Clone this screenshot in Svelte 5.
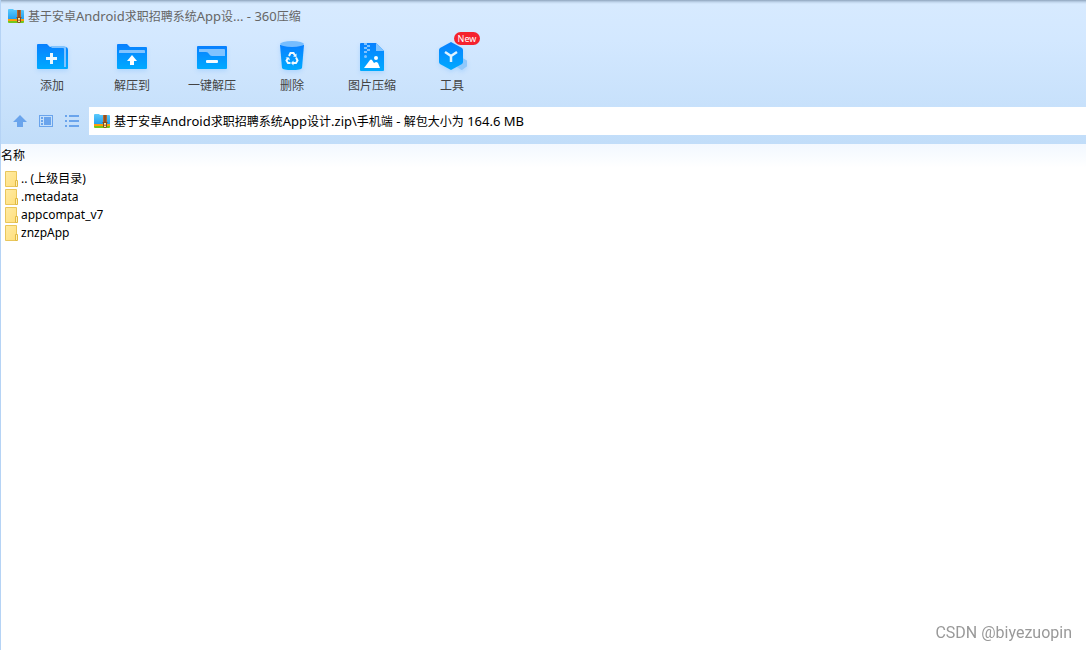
<script lang="ts">
  const archive = '基于安卓Android求职招聘系统App设计.zip';
  const folder = '手机端';
  const size = '164.6 MB';

  const tools = [
    { id: 'add', label: '添加' },
    { id: 'extract', label: '解压到' },
    { id: 'quick', label: '一键解压' },
    { id: 'delete', label: '删除' },
    { id: 'image', label: '图片压缩' },
    { id: 'tools', label: '工具', badge: 'New' },
  ];

  const files = ['.. (上级目录)', '.metadata', 'appcompat_v7', 'znzpApp'];

  const title = archive.slice(0, 21) + '... - 360压缩';
  const path = `${archive}\\${folder} - 解包大小为 ${size}`;

  // latin runs are set one size up from the chinese ones
  function runs(text: string) {
    return text.match(/[\x20-\x7e]+|[^\x20-\x7e]+/g) ?? [];
  }
</script>

{#snippet mixed(text: string)}
  {#each runs(text) as run}<span class:latin={run.charCodeAt(0) < 128}>{run}</span>{/each}
{/snippet}

{#snippet zipIcon()}
  <svg class="zip" width="16" height="14" viewBox="0 0 16 14" aria-hidden="true">
    <path d="M0 1q0-1 1-1h4l1 1h9q1 0 1 1v9H0z" fill="url(#zip-blue)" />
    <path d="M0 10h16v2H0z" fill="#ff9d0a" />
    <path d="M0 12h16v1q0 1-1 1H1q-1 0-1-1z" fill="#72c71c" />
    <path d="M9 1h4v10H9z" fill="#b8682c" />
    <path d="M10.500 1h1v8h-1z" fill="#6b3d20" />
    <path d="M8.500 8h5v1h-5z" fill="#8a4a18" />
    <path d="M9 9h4v4q-2 2-4 0z" fill="#8a4a18" />
    <path d="M10 9h2v4h-2z" fill="#ffe9a0" />
    <path d="M10.500 10.500h1v1.500h-1z" fill="#633918" />
  </svg>
{/snippet}

<svg class="defs" width="0" height="0" aria-hidden="true">
  <defs>
    <linearGradient id="blue" x1="0" y1="0" x2="0" y2="1">
      <stop offset="0" stop-color="#0880ff" />
      <stop offset="1" stop-color="#00aaff" />
    </linearGradient>
    <linearGradient id="zip-blue" x1="0" y1="0" x2="0" y2="1">
      <stop offset="0" stop-color="#5bcafc" />
      <stop offset="1" stop-color="#1d9cef" />
    </linearGradient>
    <linearGradient id="folder" x1="0" y1="0" x2="1" y2="1">
      <stop offset="0" stop-color="#ffeba3" />
      <stop offset="1" stop-color="#ffdf7c" />
    </linearGradient>
  </defs>
</svg>

<div class="window">
  <header class="chrome">
    <div class="titlebar">
      {@render zipIcon()}
      <span class="title">{@render mixed(title)}</span>
    </div>

    <div class="toolbar">
      {#each tools as tool}
        <button class="tool" type="button">
          <span class="tool-icon">
            <svg width="32" height="32" viewBox="0 0 32 32" aria-hidden="true">
              {#if tool.id === 'add'}
                <path d="M1 5q0-1 1-1h9l3 3h15q3 0 3 3v18q0 1-1 1H2q-1 0-1-1z" fill="url(#blue)" />
                <path d="M14 6h14q2 0 2 2v19h-2V9q0-1-1-1H16z" fill="#80c3ff" />
                <path d="M14 13h3v4h4v3h-4v4h-3v-4h-4v-3h4z" fill="#eaf8ff" />
              {:else if tool.id === 'extract'}
                <path d="M1 5q0-1 1-1h9l3 3h16q1 0 1 1v20q0 1-1 1H2q-1 0-1-1z" fill="url(#blue)" />
                <path d="M3 13v-2q0-1 1-1h24q1 0 1 1v2z" fill="#80c3ff" />
                <path d="M16 15l5 6h-3v4h-4v-4h-3z" fill="#fff" />
              {:else if tool.id === 'quick'}
                <rect x="1" y="6" width="30" height="23" rx="1" fill="url(#blue)" />
                <path d="M3 9h25q1 0 1 1v6H16q-2 0-3-2t-3-2H3z" fill="#80c3ff" />
                <rect x="10" y="20" width="12" height="3" rx="1" fill="#f5fbff" />
              {:else if tool.id === 'delete'}
                <path d="M4 5l2 23q1 2 10 2t10-2l2-23z" fill="url(#blue)" />
                <ellipse cx="16" cy="4" rx="12" ry="3" fill="#76bdff" />
                <g fill="none" stroke="#f0faff" stroke-width="2">
                  <path d="M13 16l1.500-3h3l1.500 2.500" />
                  <path d="M20 17.500l1.500 3L20 23h-3" />
                  <path d="M14.500 23H12l-1.500-2.500 1.500-2.500" />
                </g>
                <path d="M17 16.500l3.500.500v-3.500zM17.500 20.500v5l-2.500-2.500zM9.500 17.500h3.500l1 3z" fill="#f0faff" />
              {:else if tool.id === 'image'}
                <path d="M4 4q0-1 1-1h15l8 8v19q0 1-1 1H5q-1 0-1-1z" fill="url(#blue)" />
                <path d="M20 3l8 8h-8z" fill="#80c3ff" />
                <path d="M8 3h3v2h3v2h-3v2h3v2h-3v2H8v-2h3V9H8V7h3V5H8z" fill="#80c3ff" />
                <circle cx="9.500" cy="16.500" r="1.500" fill="#80c3ff" />
                <path d="M8 28l6-8q1-1 2 0l2 3 2-1q1 0 2 1l2 5z" fill="#fff" />
                <circle cx="20" cy="18" r="2" fill="#fff" />
              {:else}
                <path d="M25 17l5 3q1 0 1 1v5q0 1-1 1l-4 3q-1 0-2-1l-3-2z" fill="#90c8fb" />
                <path d="M15 2l11 6q1 1 1 2v12q0 1-1 2l-11 6L4 24q-1-1-1-2V10q0-1 1-2z" fill="url(#blue)" />
                <path d="M9 12l6 4 6-4M15 16v6" fill="none" stroke="#e0f3ff" stroke-width="2.500" />
              {/if}
            </svg>
            {#if tool.badge}<span class="badge">{tool.badge}</span>{/if}
          </span>
          <span>{tool.label}</span>
        </button>
      {/each}
    </div>

    <nav class="location">
      <div class="nav-buttons">
        <button class="nav" type="button" aria-label="向上">
          <svg width="16" height="16" viewBox="0 0 16 16"><path d="M8 2l7 7h-4v5H5V9H1z" fill="#6aa4ec" /></svg>
        </button>
        <button class="nav" type="button" aria-label="详细视图">
          <svg width="16" height="16" viewBox="0 0 16 16">
            <path d="M1 2h14v12H1zM2 3v10h12V3z" fill="#6aa4ec" fill-rule="evenodd" />
            <path d="M3 4h2v2H3zM3 7h2v2H3zM3 10h2v2H3zM6 4h7v8H6z" fill="#6aa4ec" />
          </svg>
        </button>
        <button class="nav" type="button" aria-label="列表视图">
          <svg width="16" height="16" viewBox="0 0 16 16">
            <path d="M1 2h2v2H1zM1 7h2v2H1zM1 12h2v2H1zM5 2h10v2H5zM5 7h10v2H5zM5 12h10v2H5z" fill="#6aa4ec" />
          </svg>
        </button>
      </div>
      <div class="path">
        {@render zipIcon()}
        <span>{@render mixed(path)}</span>
      </div>
    </nav>
  </header>

  <main>
    <table>
      <thead>
        <tr><th scope="col">名称</th></tr>
      </thead>
      <tbody>
        {#each files as file}
          <tr>
            <td>
              <div class="entry">
                <svg width="14" height="16" viewBox="0 0 14 16" aria-hidden="true">
                  <path d="M.5.500h11v15H.5z" fill="url(#folder)" stroke="#e9c65b" />
                  <path d="M10.500 9.500h2v6h-2z" fill="#fff0b5" stroke="#e1ba43" />
                </svg>
                <span>{file}</span>
              </div>
            </td>
          </tr>
        {/each}
      </tbody>
    </table>
  </main>

  <div class="watermark">CSDN @biyezuopin</div>
</div>

<style>
  :global(body) {
    margin: 0;
    background: #fff;
  }
  .defs { position: absolute; }
  .window {
    box-sizing: border-box;
    min-height: 100vh;
    border-left: 1px solid #b5d3f5;
    background: #fff;
    color: #000;
    font: 12px/18px "Noto Sans", "Noto Sans CJK SC", sans-serif;
  }
  .chrome {
    padding-bottom: 9px;
    background: linear-gradient(#8fa5bd 0, #bfd4eb 2px, #d7eaff 4px, #d3e8ff 40px, #c1ddf9 100%);
  }
  .latin { font-size: 13px; }
  .zip { flex: none; }
  .titlebar {
    display: flex;
    align-items: center;
    gap: 4px;
    height: 32px;
    padding: 0 7px;
    color: #666;
  }
  .title { white-space: nowrap; }
  .toolbar {
    display: flex;
    height: 75px;
    padding-left: 11px;
  }
  button {
    padding: 0;
    border: 0;
    background: none;
    color: inherit;
    font: inherit;
  }
  .tool {
    display: flex;
    flex-direction: column;
    align-items: center;
    gap: 5px;
    width: 80px;
    padding-top: 8px;
    color: #444;
  }
  .tool-icon {
    position: relative;
    height: 32px;
  }
  .tool-icon svg {
    display: block;
    filter: drop-shadow(0 2px 2px #80bfff66);
  }
  .badge {
    position: absolute;
    top: -8px;
    left: 18px;
    width: 26px;
    border-radius: 7px;
    background: #f5222d;
    color: #fff;
    font-size: 9px;
    line-height: 13px;
  }
  .location {
    display: flex;
    align-items: center;
    height: 28px;
  }
  .nav-buttons {
    display: flex;
    gap: 10px;
    padding: 0 9px 0 11px;
  }
  .nav {
    width: 16px;
    height: 16px;
  }
  .nav svg { display: block; }
  .path {
    display: flex;
    flex: 1;
    align-items: center;
    gap: 4px;
    min-width: 0;
    height: 28px;
    padding-left: 5px;
    background: #fff;
    white-space: nowrap;
  }
  main { background: linear-gradient(#f2f8ff, #fff 24px); }
  table {
    width: 100%;
    border-collapse: collapse;
  }
  th {
    height: 24px;
    padding: 0 0 2px;
    font-weight: normal;
    text-align: left;
  }
  td { padding: 0; }
  .entry {
    display: flex;
    align-items: center;
    gap: 2px;
    height: 18px;
    padding-left: 4px;
  }
  .watermark {
    position: fixed;
    right: 14px;
    bottom: 7px;
    color: #999;
    font: 16px/20px Roboto, sans-serif;
  }
</style>
